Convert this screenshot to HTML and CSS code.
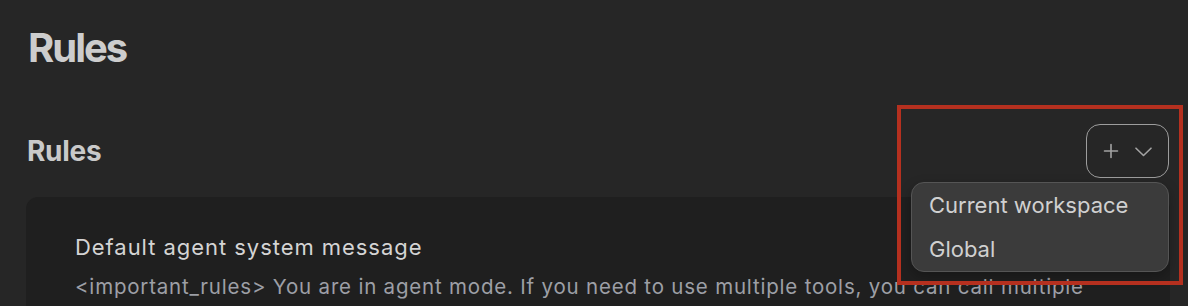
FILE: index.html
```html
<!DOCTYPE html>
<html lang="en">
<head>
<meta charset="utf-8">
<title>Rules</title>
<link rel="stylesheet" href="styles.css">
</head>
<body>
<main class="page">
  <h1 class="page-title">Rules</h1>
  <div class="section-head">
    <h2 class="section-title">Rules</h2>
    <div class="add-wrap">
      <button class="add-btn" type="button" aria-label="Add rule">
        <svg class="ico-plus" width="16" height="16" viewBox="0 0 16 16" aria-hidden="true">
          <path d="M8 1.5v13M1.5 8h13" fill="none" stroke="currentColor" stroke-width="1.6" stroke-linecap="round"/>
        </svg>
        <svg class="ico-chev" width="17" height="10" viewBox="0 0 17 10" aria-hidden="true">
          <path d="M1 1.2l7.5 7.3 7.5-7.3" fill="none" stroke="currentColor" stroke-width="1.6" stroke-linecap="round" stroke-linejoin="round"/>
        </svg>
      </button>
      <div class="menu" role="menu">
        <div class="menu-item" role="menuitem">Current workspace</div>
        <div class="menu-item" role="menuitem">Global</div>
      </div>
    </div>
  </div>
  <section class="card">
    <h3 class="card-title">Default agent system message</h3>
    <p class="card-text">&lt;important_rules&gt; You are in agent mode. If you need to use multiple tools, you can call multiple</p>
  </section>
</main>
<div class="highlight" aria-hidden="true"></div>
</body>
</html>
```

FILE: styles.css
```css
html, body {
  margin: 0;
  padding: 0;
  background: #262626;
  overflow: hidden;
}
body {
  font-family: Inter, "Noto Sans", "Liberation Sans", sans-serif;
  color: #cccccc;
  position: relative;
  min-height: 306px;
}
.page {
  padding: 24px 18px 0 26px;
}
.page-title {
  margin: 0;
  padding-left: 2px;
  font-size: 40px;
  line-height: 48px;
  font-weight: 700;
  color: #cdcdcd;
  letter-spacing: -2px;
}
.section-head {
  margin-top: 52px;
  display: flex;
  align-items: center;
  justify-content: space-between;
  height: 54px;
}
.section-title {
  margin: 0;
  padding-left: 1px;
  font-size: 28px;
  line-height: 34px;
  font-weight: 700;
  color: #c9c9c9;
  letter-spacing: -0.3px;
}
.add-wrap {
  position: relative;
  margin-right: 1px;
}
.add-btn {
  box-sizing: border-box;
  width: 83px;
  height: 54px;
  border: 1.5px solid #9d9d9d;
  border-radius: 14px;
  background: transparent;
  color: #a3a3a3;
  display: flex;
  align-items: center;
  justify-content: center;
  gap: 16px;
  padding: 0;
}
.ico-plus, .ico-chev { display: block; }
.ico-chev { margin-top: 2px; }
.menu {
  position: absolute;
  top: calc(100% + 4px);
  right: 0;
  width: 258px;
  box-sizing: border-box;
  background: #3b3b3b;
  border: 1px solid #555555;
  border-radius: 13px;
  box-shadow: 0 4px 12px rgba(0,0,0,0.25);
  z-index: 2;
}
.menu-item {
  height: 44px;
  line-height: 44px;
  padding-left: 17px;
  font-size: 22px;
  color: #d0d0d0;
}
.card {
  margin-top: 19px;
  background: #1f1f1f;
  border-radius: 12px;
  padding: 35px 49px 40px 49px;
}
.card-title {
  margin: 0;
  font-size: 22px;
  line-height: 30px;
  font-weight: 400;
  color: #d4d4d4;
  letter-spacing: 0.95px;
}
.card-text {
  margin: 10px 0 0;
  font-size: 20.5px;
  line-height: 30px;
  color: #9d9fa6;
  letter-spacing: 0.8px;
}
.highlight {
  position: absolute;
  left: 897px;
  top: 105px;
  width: 286px;
  height: 180px;
  box-sizing: border-box;
  border: 4px solid #b5301f;
  z-index: 5;
  pointer-events: none;
}
```
